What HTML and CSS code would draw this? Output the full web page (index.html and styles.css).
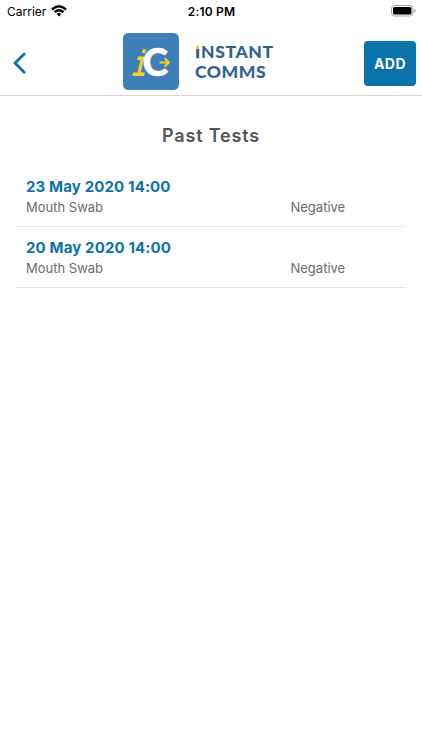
FILE: index.html
```html
<!DOCTYPE html>
<html lang="en">
<head>
<meta charset="utf-8">
<title>Past Tests</title>
<link rel="stylesheet" href="styles.css">
</head>
<body>
<div class="status">
  <div class="carrier"><span>Carrier</span>
    <svg width="16" height="12" viewBox="0 0 16 12"><g fill="none" stroke="#000" stroke-width="2.4"><path d="M1 4.5Q8-1.8 15 4.5"/><path d="M3.5 7.2Q8 3.2 12.5 7.2"/></g><path d="M5.6 8.9Q8 7 10.4 8.9L8 11.5Z"/></svg>
  </div>
  <span class="time">2:10 PM</span>
  <svg class="battery" width="25" height="12" viewBox="0 0 25 12"><rect x=".5" y=".5" width="21.5" height="10.5" rx="3" fill="#fff" stroke="#a2a2a2"/><rect x="2" y="2" width="18.5" height="7.5" rx="1.6"/><path d="M23.3 4v4q1.3-.6 1.3-2t-1.3-2" fill="#999"/></svg>
</div>
<header class="header">
  <svg class="back" width="14" height="22" viewBox="0 0 14 22"><path d="M12.2 1.9 3 11l9.2 9.2" fill="none" stroke="#1171a7" stroke-width="2.8" stroke-linecap="round"/></svg>
  <div class="brand">
    <svg width="56" height="57" viewBox="0 0 56 57"><rect width="56" height="57" rx="5.5" fill="#3e7fb7"/><text class="logo-i" transform="translate(9 43) skewX(-6) scale(.62 1)">i</text><text class="logo-c" x="19.5" y="42.6" textLength="25.5" lengthAdjust="spacingAndGlyphs">C</text><path d="M36 29.5h10M41.7 25l4.6 4.5-4.6 4.5" fill="none" stroke="#3e7fb7" stroke-width="5"/><path d="M36.5 29.5h9M41.7 25.2l4.2 4.3-4.2 4.3" fill="none" stroke="#f5cf28" stroke-width="2"/></svg>
    <div class="wordmark"><div class="word-a"><span class="accent">I</span>NSTANT</div><div class="word-b">COMMS</div></div>
  </div>
  <button class="add">ADD</button>
</header>
<main>
  <h1>Past Tests</h1>
  <ul>
    <li><div class="date">23 May 2020 14:00</div><div class="row"><span>Mouth Swab</span><span>Negative</span></div></li>
    <li><div class="date">20 May 2020 14:00</div><div class="row"><span>Mouth Swab</span><span>Negative</span></div></li>
  </ul>
</main>
</body>
</html>
```
FILE: styles.css
```css
* { box-sizing: border-box; }
body { margin: 0; height: 750px; background: #fff; font-family: Inter, sans-serif; overflow: hidden; }
svg { display: block; flex: none; }
.status { height: 22px; padding: 0 6px 0 7px; display: grid; grid-template-columns: 1fr auto 1fr; align-items: center; font-size: 12px; color: #000; }
.carrier { display: flex; align-items: center; gap: 4.5px; }
.time { font-weight: 600; letter-spacing: .2px; }
.battery { justify-self: end; }
.header { height: 74px; border-bottom: 1px solid #d8d8d8; display: flex; padding: 11px 6px 0 12px; }
.back { margin-top: 19px; }
.brand { display: flex; margin-left: 97px; width: 241px; }
.wordmark { margin-left: 16px; padding-top: 9px; font-family: Lato, sans-serif; font-weight: 900; font-size: 17.5px; line-height: 20px; color: #2f6290; white-space: nowrap; }
.word-a { letter-spacing: .65px; }
.word-b { letter-spacing: .55px; }
.accent { background: linear-gradient(#f3cb2d 8.5px, #2f6290 8.5px); -webkit-background-clip: text; background-clip: text; color: transparent; -webkit-text-stroke: .5px transparent; }
.logo-i { font: italic 700 37px "Liberation Mono", monospace; fill: #f5cf28; }
.logo-c { font: 900 37px Lato, sans-serif; fill: #fff; stroke: #fff; stroke-width: .5px; }
.add { width: 52px; height: 45px; margin-top: 8px; padding: 0; border: 0; border-radius: 4px; background: #0b73ab; color: #fff; font: 700 14px Inter, sans-serif; letter-spacing: .5px; }
h1 { margin: 28px 0 0; text-align: center; color: #555; font-size: 18px; font-weight: 600; line-height: 24px; letter-spacing: .85px; }
ul { list-style: none; margin: 18px 16px 0; padding: 0; }
li { height: 61px; padding: 10px 10px 0; border-bottom: 1px solid #e5e5e5; }
.date { color: #0c72a9; font-size: 15px; font-weight: 700; line-height: 21px; letter-spacing: .14px; }
.row { display: grid; grid-template-columns: 264.5px 1fr; color: #6c6c6c; font-size: 13px; line-height: 21px; }
```
